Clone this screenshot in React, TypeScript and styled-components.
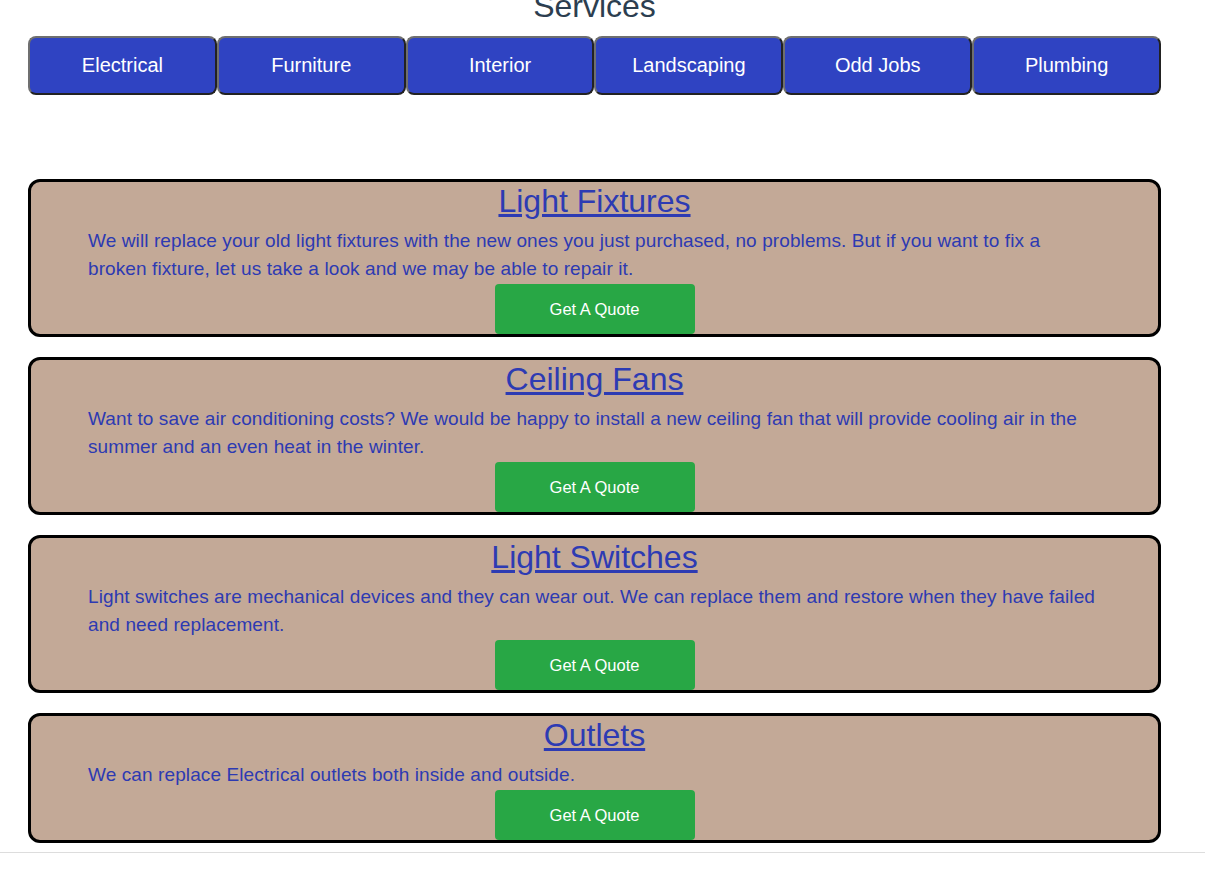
import React from "react";
import styled, { createGlobalStyle } from "styled-components";

const GlobalStyle = createGlobalStyle`
  html, body {
    margin: 0;
    padding: 0;
    background: #ffffff;
    font-family: "Liberation Sans", Arial, sans-serif;
  }
`;

const Page = styled.div`
  display: flex;
  flex-direction: column;
  margin-top: -12px;
`;

const Main = styled.div`
  width: 1133px;
  margin-left: 28px;
  display: flex;
  flex-direction: column;
`;

const Heading = styled.h1`
  margin: 0 0 11px;
  font-size: 32px;
  line-height: 37px;
  font-weight: 400;
  color: #2c3e50;
  text-align: center;
`;

const Tabs = styled.div`
  display: grid;
  grid-template-columns: repeat(6, 1fr);
  margin-bottom: 84px;
`;

const Tab = styled.button`
  height: 59px;
  box-sizing: border-box;
  background: #2f43c2;
  color: #ffffff;
  font-family: "Liberation Sans", Arial, sans-serif;
  font-size: 20px;
  border-style: solid;
  border-width: 2px;
  border-color: #6f6f6f #222222 #222222 #6f6f6f;
  border-radius: 8px;
  padding: 0;
  cursor: pointer;
`;

const CardList = styled.div`
  display: flex;
  flex-direction: column;
  gap: 20px;
`;

const Card = styled.div`
  box-sizing: border-box;
  background: #c3a997;
  border: 3px solid #000000;
  border-radius: 12px;
  padding: 1px 57px 0;
  display: flex;
  flex-direction: column;
  align-items: center;
`;

const CardTitle = styled.a`
  font-size: 32px;
  line-height: 37px;
  color: #2d3bb3;
  text-decoration: underline;
  margin-bottom: 7px;
`;

const CardText = styled.p`
  align-self: stretch;
  margin: 0 0 1px;
  font-size: 19px;
  letter-spacing: 0.1px;
  line-height: 28px;
  color: #2d3ab2;
`;

const QuoteButton = styled.button`
  width: 200px;
  height: 50px;
  background: #28a745;
  color: #ffffff;
  border: none;
  border-radius: 4px;
  font-family: "Liberation Sans", Arial, sans-serif;
  font-size: 16.5px;
  cursor: pointer;
`;

const Divider = styled.div`
  margin-top: 9px;
  border-top: 1px solid #dddddd;
  height: 30px;
`;

const tabs = ["Electrical", "Furniture", "Interior", "Landscaping", "Odd Jobs", "Plumbing"];

const services = [
  {
    title: "Light Fixtures",
    text: "We will replace your old light fixtures with the new ones you just purchased, no problems. But if you want to fix a broken fixture, let us take a look and we may be able to repair it.",
  },
  {
    title: "Ceiling Fans",
    text: "Want to save air conditioning costs? We would be happy to install a new ceiling fan that will provide cooling air in the summer and an even heat in the winter.",
  },
  {
    title: "Light Switches",
    text: "Light switches are mechanical devices and they can wear out. We can replace them and restore when they have failed and need replacement.",
  },
  {
    title: "Outlets",
    text: "We can replace Electrical outlets both inside and outside.",
  },
];

export default function App() {
  return (
    <>
      <GlobalStyle />
      <Page>
        <Main>
          <Heading>Services</Heading>
          <Tabs>
            {tabs.map((t) => (
              <Tab key={t}>{t}</Tab>
            ))}
          </Tabs>
          <CardList>
            {services.map((s) => (
              <Card key={s.title}>
                <CardTitle href="#">{s.title}</CardTitle>
                <CardText>{s.text}</CardText>
                <QuoteButton>Get A Quote</QuoteButton>
              </Card>
            ))}
          </CardList>
        </Main>
        <Divider />
      </Page>
    </>
  );
}
